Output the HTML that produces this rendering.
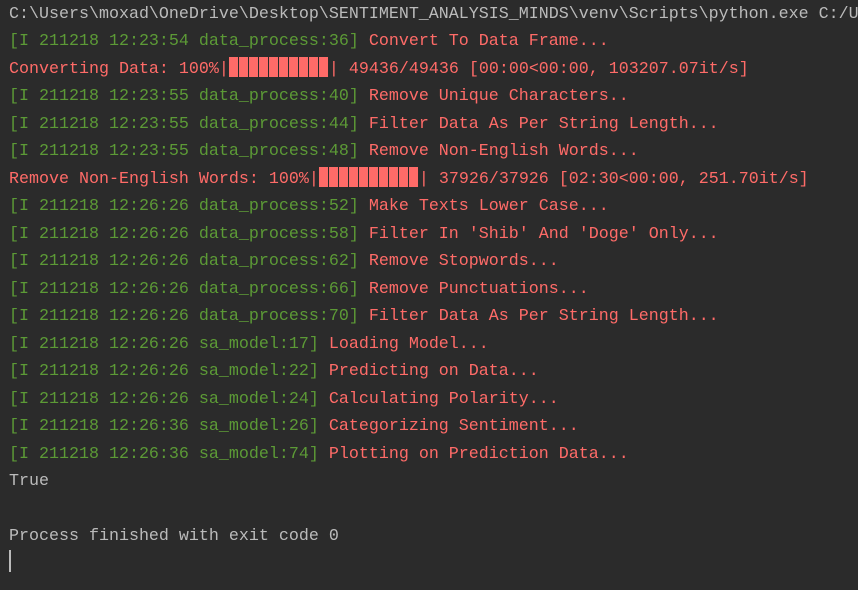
<!DOCTYPE html>
<html><head><meta charset="utf-8"><style>
html,body{margin:0;padding:0;background:#2b2b2b;width:858px;height:590px;overflow:hidden}
pre{margin:0;padding:0 0 0 9px;position:absolute;top:0.5px;left:0;font-family:"Liberation Mono","DejaVu Sans Mono",monospace;font-size:16.67px;line-height:27.5px;color:#bbbbbb;white-space:pre}
.g{color:#5c9a36}.r{color:#ff6b68}
.b{display:inline-block;width:9px;height:20px;background:#ff6b68;margin-right:1px;vertical-align:-4px}
.cur{position:absolute;left:9px;top:550px;width:2px;height:22px;background:#bbbbbb}
</style></head><body><pre>C:\Users\moxad\OneDrive\Desktop\SENTIMENT_ANALYSIS_MINDS\venv\Scripts\python.exe C:/U
<span class="g">[I 211218 12:23:54 data_process:36]</span> <span class="r">Convert To Data Frame...</span>
<span class="r">Converting Data: 100%|<span class="b"></span><span class="b"></span><span class="b"></span><span class="b"></span><span class="b"></span><span class="b"></span><span class="b"></span><span class="b"></span><span class="b"></span><span class="b"></span>| 49436/49436 [00:00&lt;00:00, 103207.07it/s]</span>
<span class="g">[I 211218 12:23:55 data_process:40]</span> <span class="r">Remove Unique Characters..</span>
<span class="g">[I 211218 12:23:55 data_process:44]</span> <span class="r">Filter Data As Per String Length...</span>
<span class="g">[I 211218 12:23:55 data_process:48]</span> <span class="r">Remove Non-English Words...</span>
<span class="r">Remove Non-English Words: 100%|<span class="b"></span><span class="b"></span><span class="b"></span><span class="b"></span><span class="b"></span><span class="b"></span><span class="b"></span><span class="b"></span><span class="b"></span><span class="b"></span>| 37926/37926 [02:30&lt;00:00, 251.70it/s]</span>
<span class="g">[I 211218 12:26:26 data_process:52]</span> <span class="r">Make Texts Lower Case...</span>
<span class="g">[I 211218 12:26:26 data_process:58]</span> <span class="r">Filter In 'Shib' And 'Doge' Only...</span>
<span class="g">[I 211218 12:26:26 data_process:62]</span> <span class="r">Remove Stopwords...</span>
<span class="g">[I 211218 12:26:26 data_process:66]</span> <span class="r">Remove Punctuations...</span>
<span class="g">[I 211218 12:26:26 data_process:70]</span> <span class="r">Filter Data As Per String Length...</span>
<span class="g">[I 211218 12:26:26 sa_model:17]</span> <span class="r">Loading Model...</span>
<span class="g">[I 211218 12:26:26 sa_model:22]</span> <span class="r">Predicting on Data...</span>
<span class="g">[I 211218 12:26:26 sa_model:24]</span> <span class="r">Calculating Polarity...</span>
<span class="g">[I 211218 12:26:36 sa_model:26]</span> <span class="r">Categorizing Sentiment...</span>
<span class="g">[I 211218 12:26:36 sa_model:74]</span> <span class="r">Plotting on Prediction Data...</span>
True

Process finished with exit code 0
</pre><div class="cur"></div></body></html>
